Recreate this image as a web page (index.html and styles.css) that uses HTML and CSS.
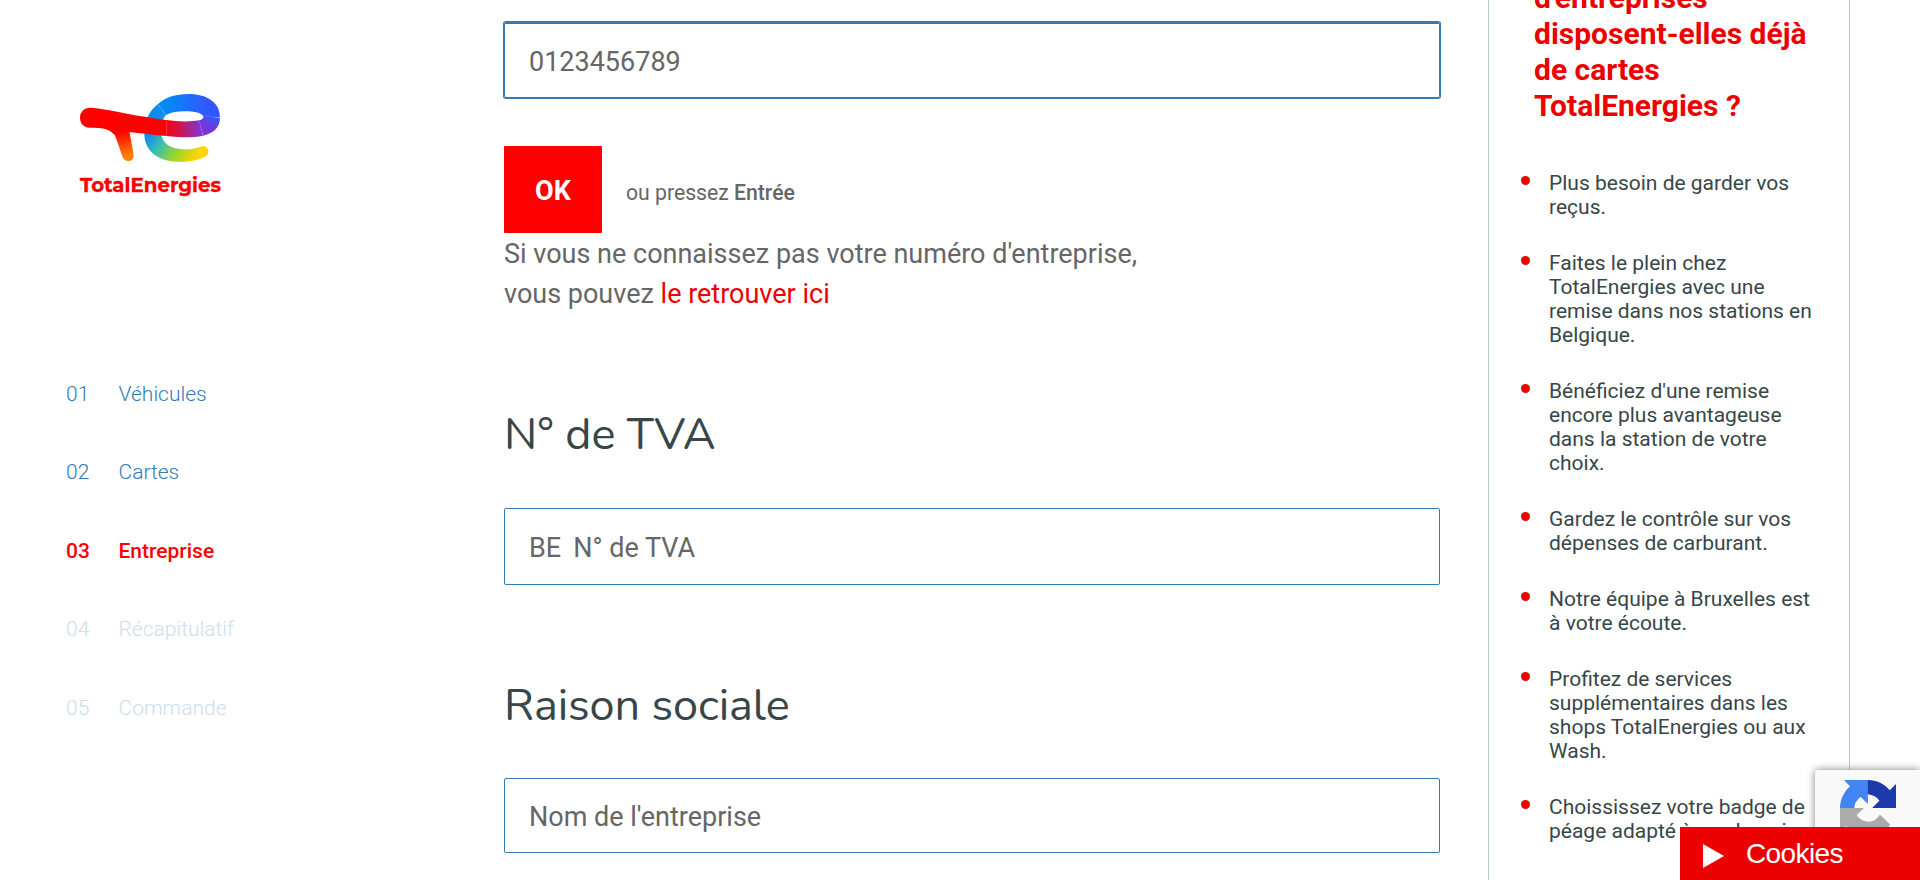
FILE: index.html
```html
<!DOCTYPE html>
<html lang="fr">
<head>
<meta charset="utf-8">
<title>TotalEnergies</title>
<link rel="stylesheet" href="styles.css">
</head>
<body>
<div class="page">
  <aside class="nav">
    <svg class="logo" viewBox="0 0 540 390" width="180" height="130">
      <defs>
        <linearGradient id="leg" gradientUnits="userSpaceOnUse" x1="185" y1="155" x2="203" y2="240"><stop offset="0" stop-color="#f00"/><stop offset=".85" stop-color="#ff7f00"/></linearGradient>
        <linearGradient id="mid" gradientUnits="userSpaceOnUse" x1="320" y1="0" x2="425" y2="0"><stop offset="0" stop-color="#f50019"/><stop offset=".3" stop-color="#d5123c"/><stop offset="1" stop-color="#8034d8"/></linearGradient>
        <linearGradient id="right" gradientUnits="userSpaceOnUse" x1="430" y1="160" x2="455" y2="110"><stop offset="0" stop-color="#8233d6"/><stop offset=".5" stop-color="#7038e0"/><stop offset="1" stop-color="#3558fc"/></linearGradient>
        <linearGradient id="top" gradientUnits="userSpaceOnUse" x1="300" y1="80" x2="440" y2="80"><stop offset=".15" stop-color="#008af8"/><stop offset="1" stop-color="#3357ff"/></linearGradient>
        <linearGradient id="low" gradientUnits="userSpaceOnUse" x1="275" y1="140" x2="420" y2="230"><stop offset="0" stop-color="#0a8af2"/><stop offset=".3" stop-color="#3bbfae"/><stop offset=".6" stop-color="#96d62e"/><stop offset=".95" stop-color="#ffd500"/></linearGradient>
      </defs>
      <path fill="url(#low)" d="M293 73C267 93 253 126 253 160C253 213 293 246 362 246C390 246 412 241 432 232C444 227 448 216 444 207C439 198 430 196 421 200C407 206 392 208 375 208C333 208 307 192 303 160C303 135 306 117 319 105Z"/>
      <path fill="url(#top)" d="M293 73C315 52 346 42 385 42C445 42 480 70 480 112L430 110C427 99 403 94 374 94C351 94 333 97 319 105Z"/>
      <path fill="url(#right)" d="M430 108L480 113C480 143 459 160 429 167L417 121C426 119 432 115 430 108Z"/>
      <path fill="url(#mid)" d="M319 120C353 125 388 126 418 121L429 167C395 175 360 172 319 168Z"/>
      <path fill="#f00" d="M93 83C150 88 220 107 260 111C280 115 300 119 320 120V168C280 165 240 160 208 156L160 162C150 149 133 144 105 143H90C72 143 60 130 60 113C60 94 74 82 93 83Z"/>
      <path fill="url(#leg)" d="M150 151C160 157 165 165 169 177L188 232C194 248 222 248 221 225L208 153Z"/>
      <path stroke="#fff" stroke-opacity=".25" stroke-width="1.5" d="M293 73L319 105M430 107L478 113M418 123L429 165M320 120V168"/>
      <text class="logo-name" x="60" y="337" textLength="423" lengthAdjust="spacingAndGlyphs">TotalEnergies</text>
    </svg>
    <ol class="steps">
      <li class="step"><span>01</span><span>Véhicules</span></li>
      <li class="step"><span>02</span><span>Cartes</span></li>
      <li class="step current"><span>03</span><span>Entreprise</span></li>
      <li class="step next"><span>04</span><span>Récapitulatif</span></li>
      <li class="step next"><span>05</span><span>Commande</span></li>
    </ol>
  </aside>
  <main class="form">
    <div class="field focus">0123456789</div>
    <div class="submit">
      <button class="ok">OK</button>
      <span class="hint">ou pressez <b>Entrée</b></span>
    </div>
    <p class="help">Si vous ne connaissez pas votre numéro d'entreprise,<br>vous pouvez <a class="link">le retrouver ici</a></p>
    <h2 class="title vat">N° de TVA</h2>
    <div class="field"><span class="prefix">BE</span>N° de TVA</div>
    <h2 class="title company">Raison sociale</h2>
    <div class="field short">Nom de l'entreprise</div>
  </main>
  <aside class="info">
    <h3 class="question">d'entreprises<br>disposent-elles déjà<br>de cartes<br>TotalEnergies ?</h3>
    <ul class="benefits">
      <li>Plus besoin de garder vos<br>reçus.</li>
      <li>Faites le plein chez<br>TotalEnergies avec une<br>remise dans nos stations en<br>Belgique.</li>
      <li>Bénéficiez d'une remise<br>encore plus avantageuse<br>dans la station de votre<br>choix.</li>
      <li>Gardez le contrôle sur vos<br>dépenses de carburant.</li>
      <li>Notre équipe à Bruxelles est<br>à votre écoute.</li>
      <li>Profitez de services<br>supplémentaires dans les<br>shops TotalEnergies ou aux<br>Wash.</li>
      <li>Choississez votre badge de<br>péage adapté à vos besoins.</li>
    </ul>
  </aside>
</div>
<div class="captcha">
  <svg viewBox="0 0 64 64" width="56" height="56">
    <path fill="#1c3aa9" d="M64 31.955l-.033-1.37V4.687l-7.16 7.16C50.948 4.674 42.033.093 32.05.093c-10.4 0-19.622 4.96-25.458 12.64l11.736 11.86a15.55 15.55 0 0 1 4.754-5.334c2.05-1.6 4.952-2.906 8.968-2.906.485 0 .86.057 1.135.163 4.976.393 9.288 3.14 11.828 7.124l-8.307 8.307L64 31.953"/>
    <path fill="#4285f4" d="M31.862.094l-1.37.033H4.594l7.16 7.16C4.58 13.147 0 22.06 0 32.046c0 10.4 4.96 19.622 12.64 25.458L24.5 45.768a15.55 15.55 0 0 1-5.334-4.754c-1.6-2.05-2.906-4.952-2.906-8.968 0-.485.057-.86.163-1.135.393-4.976 3.14-9.288 7.124-11.828l8.307 8.307L31.86.095"/>
    <path fill="#ababab" d="M.001 32.045l.033 1.37v25.898l7.16-7.16c5.86 7.173 14.774 11.754 24.76 11.754 10.4 0 19.622-4.96 25.458-12.64l-11.736-11.86a15.55 15.55 0 0 1-4.754 5.334c-2.05 1.6-4.952 2.906-8.968 2.906-.485 0-.86-.057-1.135-.163-4.976-.393-9.288-3.14-11.828-7.124l8.307-8.307c-10.522.04-22.4.066-27.295-.005"/>
  </svg>
</div>
<div class="cookies"><svg viewBox="0 0 21 24" width="21" height="24"><path fill="#fff" d="M0 0L21 12L0 24Z"/></svg><span>Cookies</span></div>
</body>
</html>
```
FILE: styles.css
```css
* { box-sizing: border-box; }
body { margin: 0; height: 880px; overflow: hidden; background: #fff; font-family: Roboto, sans-serif; color: #666; }
.page { display: grid; grid-template-columns: 504px 984px 362px; height: 880px; overflow: hidden; }

.nav { padding-top: 80px; }
.logo { display: block; margin-left: 60px; }
.logo-name { font: 700 62px Montserrat, Inter, sans-serif; fill: #f00; stroke: #f00; stroke-width: 1px; }
.steps { list-style: none; margin: 143.5px 0 0; padding: 0 0 0 66px; }
.step { display: flex; height: 78.5px; line-height: 80px; font-size: 21px; font-weight: 300; color: #337ab7; }
.step span:first-child { width: 52.5px; }
.current { color: #f00; font-weight: 500; }
.next { color: #cbdeed; }

.form { padding-top: 22px; }
.field { width: 936px; height: 77px; padding: 2px 24px 0; border: 1px solid #337ab7; border-radius: 2px; display: flex; align-items: center; font-size: 27px; line-height: 32px; }
.field.focus { border-top-width: 2px; box-shadow: 0 0 0 1px #337ab7; height: 76px; }
.field.short { height: 75px; }
.prefix { margin-right: 12px; }
.submit { display: flex; align-items: center; gap: 24px; margin-top: 48px; }
.ok { width: 98px; height: 87px; padding: 2px 0 0; border: 0; border-radius: 1px; background: #f00; color: #fff; font: 700 27px Roboto, sans-serif; }
.hint { font-size: 21.2px; padding-top: 6px; }
.hint b { font-weight: 500; }
.help { margin: 1px 0 0; font-size: 27px; line-height: 40px; }
.link { color: #ed0000; }
.title { margin: 0; font-family: Nunito, Lato, sans-serif; font-weight: 400; font-size: 45px; line-height: 56px; color: #374649; }
.vat { margin-top: 93px; margin-bottom: 45px; letter-spacing: -.1px; }
.company { margin-top: 93px; margin-bottom: 44px; letter-spacing: -.1px; }

.info { border: solid #b6c9cf; border-width: 0 1px; overflow: hidden; }
.question { margin: -20px 0 0 45px; font-size: 30px; line-height: 36px; font-weight: 700; color: #ed0000; }
.benefits { list-style: none; margin: 47px 0 0 32px; padding: 0; display: grid; gap: 32px; }
.benefits li { position: relative; padding-left: 28px; font-size: 21px; line-height: 24px; color: #374649; white-space: nowrap; }
.benefits li::before { content: ""; position: absolute; left: 0; top: 5px; width: 9px; height: 9px; border-radius: 50%; background: #ed0000; }

.captcha { position: absolute; left: 1815px; top: 770px; width: 105px; height: 110px; padding: 10px 0 0 25px; background: #f9f9f9; border-radius: 3px 0 0 3px; box-shadow: 0 0 8px gray; }
.cookies { position: absolute; left: 1680px; top: 827px; width: 240px; height: 53px; background: #ed0000; color: #fff; display: flex; align-items: center; gap: 22px; padding-left: 23px; font: 28px "Liberation Sans", sans-serif; letter-spacing: -.6px; }
.cookies svg { margin-top: 5px; }
.cookies span { padding-top: 1px; }
```
